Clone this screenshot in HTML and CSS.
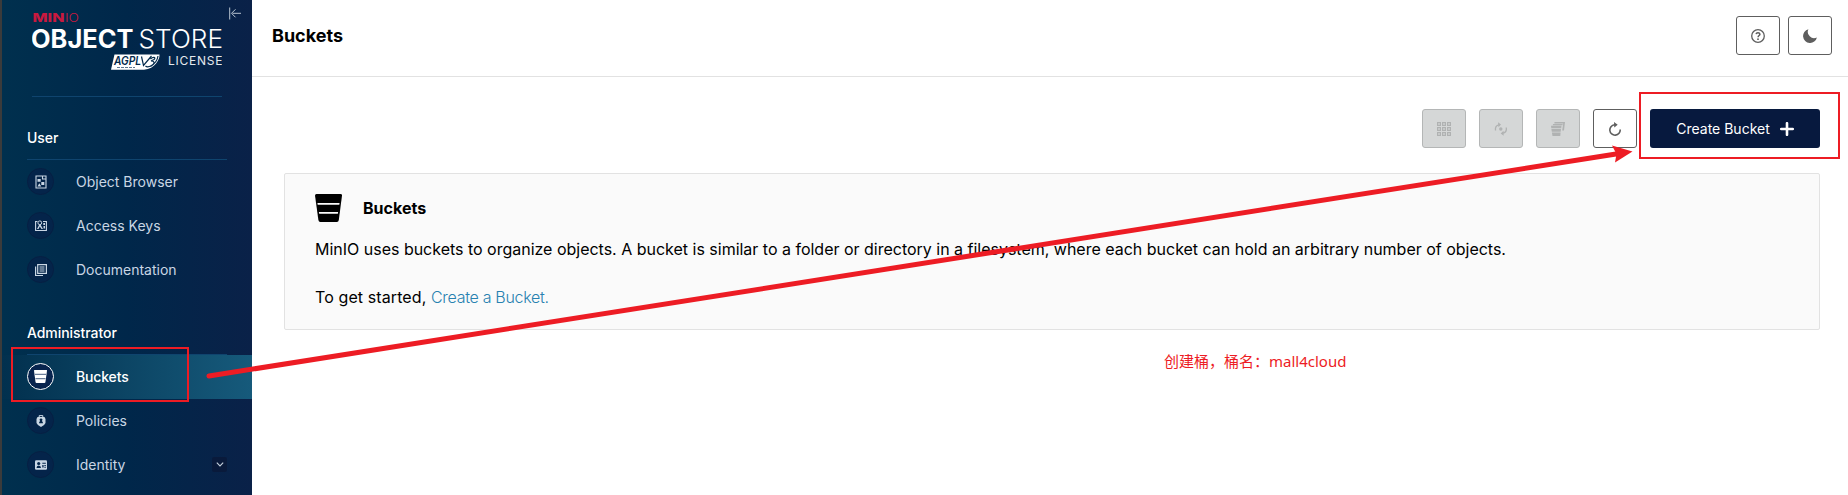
FILE: index.html
```html
<!DOCTYPE html>
<html lang="en">
<head>
<meta charset="utf-8">
<title>Buckets</title>
<link rel="stylesheet" href="styles.css">
</head>
<body>
<div class="app">
  <nav class="sidebar">
    <div class="brand">
      <svg class="logo" width="190" height="62" viewBox="32 10 190 62">
        <text class="logo-minio" x="32.5" y="22" textLength="32" lengthAdjust="spacingAndGlyphs">MIN</text>
        <text class="logo-io" x="65" y="22" textLength="14" lengthAdjust="spacingAndGlyphs">IO</text>
        <text class="logo-object" x="31" y="47.500" textLength="102.500" lengthAdjust="spacingAndGlyphs">OBJECT</text>
        <text class="logo-store" x="138.500" y="47.500" textLength="84.500" lengthAdjust="spacingAndGlyphs">STORE</text>
        <path fill="#fff" d="M114.500 54.500H159.500C160 59 155 69 144 69.800H111Z"/>
        <text class="logo-agpl" x="114" y="64.800" textLength="27" lengthAdjust="spacingAndGlyphs">AGPL</text>
        <path d="M117 67.500H135" stroke="#5c7690" stroke-dasharray="3 1"/>
        <path d="M141.500 56.500l2 9 8-9.500M150.500 59c2.500-2.500 6-2 3.500.5l-3 1.500c4 0 4 2.500.5 4.500-2.500 1.500-5 1.500-6 .5M158 56c-.5 4-3.500 8-7.500 10.500" fill="none" stroke="#02294b" stroke-width="1.200"/>
        <text class="logo-license" x="168" y="65.300" textLength="54.500">LICENSE</text>
      </svg>
      <svg class="collapse" width="13" height="13" viewBox="0 0 13 13" fill="none" stroke="#b8c4d0"><path d="M.7.500v12M12 6.300H3.500M6.500 2.300l-4 4 4 4"/></svg>
    </div>
    <div class="group">User</div>
    <a class="item"><span class="badge"><svg width="12" height="14" viewBox="0 0 12 14"><path d="M1 1h10v12H1zM7.500 1v3H11" fill="none" stroke="#c9d6e4" stroke-width="1.100"/><path d="M2.500 4h3.200v2.800H2.500zM6.300 7h3v3h-3zM2.500 11.500 4.300 8.200l2 3.300z" fill="#c9d6e4"/></svg></span><span class="label">Object Browser</span></a>
    <a class="item"><span class="badge"><svg width="12" height="11" viewBox="0 0 12 11"><path d="M2.500 1.500H.600v9h10.800v-9H8" fill="none" stroke="#c9d6e4" stroke-width="1.100"/><circle cx="4.800" cy="2.800" r="1.900" fill="none" stroke="#c9d6e4"/><path d="M4.300 4.500 2 9h1.500L4.800 6.500 6.500 9H8L5.400 4.500zM8.300 3h1.700v2H8.300zM8.500 6H10v2.500H8.500z" fill="#c9d6e4"/></svg></span><span class="label">Access Keys</span></a>
    <a class="item"><span class="badge"><svg width="12" height="12" viewBox="0 0 12 12" fill="none" stroke="#c9d6e4"><path d="M.6 2.500v9H8M2.700.600h8.700v8.800H2.700z" stroke-width="1.200"/><path d="M4.500 3h5M4.500 5h5M4.500 7h5"/></svg></span><span class="label">Documentation</span></a>
    <div class="group">Administrator</div>
    <a class="item active"><span class="badge"><svg width="13" height="13" viewBox="0 0 28 28"><path fill="#fff" d="M1 0h26q1.200 0 1 1.500L24.700 26q-.3 2-2 2H5.300q-1.700 0-2-2L0 1.500Q0 0 1 0z"/><path fill="#6d7f9b" d="M1.500 8h25l-.4 3H1.900zM3 17h22l-.4 3H3.400z"/></svg></span><span class="label">Buckets</span></a>
    <a class="item"><span class="badge"><svg width="10" height="12" viewBox="0 0 10 12"><path d="M3.200 2V.600h3.600V2" fill="none" stroke="#c9d6e4"/><path fill="#c9d6e4" fill-rule="evenodd" d="M1.500 2h7L9.500 4v4Q8.500 10.500 5 12 1.500 10.500.5 8V4zM5 3.400a1.400 1.400 0 0 0-.9 2.500Q3 6.500 3 8.300h4Q7 6.500 5.900 5.900A1.400 1.400 0 0 0 5 3.400z"/></svg></span><span class="label">Policies</span></a>
    <a class="item"><span class="badge"><svg width="12" height="10" viewBox="0 0 12 10"><rect width="12" height="9.500" y=".2" rx="1.200" fill="#c9d6e4"/><path fill="#04244a" d="M7.300 2.700h3.500v1H7.300zM7.300 5h1.300v2.500H7.300zM9.400 5h1.400v1H9.400zM9.400 6.700h1.400v1H9.400zM1.500 8q0-2.200 2.200-2.500Q6 5.800 6 8z"/><circle cx="3.700" cy="3.500" r="1.600" fill="#04244a"/></svg></span><span class="label">Identity</span><span class="expand"><svg width="8" height="5" viewBox="0 0 8 5"><path d="M.8.600 4 3.900 7.200.600" fill="none" stroke="#c4cfdb" stroke-width="1.100"/></svg></span></a>
  </nav>
  <main class="main">
    <header class="topbar">
      <h1 class="title">Buckets</h1>
      <div class="actions">
        <button class="btn"><svg width="14" height="14" viewBox="0 0 14 14"><circle cx="7" cy="7" r="6.300" fill="none" stroke="#5e5e5e" stroke-width="1.300"/><path d="M5.100 5.100Q5.300 3.700 7 3.700T8.900 5.200C8.900 6.500 7.100 6.500 7.100 8.200" fill="none" stroke="#5e5e5e" stroke-width="1.500"/><circle cx="7" cy="10.200" r=".9" fill="#5e5e5e"/></svg></button>
        <button class="btn"><svg width="14" height="14" viewBox="0 0 14 14"><path fill="#5e5e5e" d="M5.400.200A7 7 0 1 0 13.900 8.500 6.300 6.300 0 0 1 5.400.200z"/></svg></button>
      </div>
    </header>
    <div class="toolbar">
      <button class="btn disabled"><svg width="14" height="14" viewBox="0 0 14 14" fill="none" stroke="#b0b2b2" stroke-width="1.200"><path d="M.6.600h2.800v2.800H.6zM5.600.600h2.800v2.800H5.600zM10.600.600h2.800v2.800h-2.800zM.6 5.600h2.800v2.800H.6zM5.600 5.600h2.800v2.800H5.600zM10.600 5.600h2.800v2.800h-2.800zM.6 10.600h2.800v2.800H.6zM5.600 10.600h2.800v2.800H5.600zM10.600 10.600h2.800v2.800h-2.800z"/></svg></button>
      <button class="btn disabled"><svg width="14" height="14" viewBox="0 0 14 14" fill="none" stroke="#b0b2b2" stroke-width="1.300"><path d="M1.500 8.500Q.8 3.500 5 2.800M12.300 5.500Q13 10.500 8.700 11.200"/><path d="M4 .3 7 2.600 4.500 5.300zM9.500 8.700 6.700 11.500 9.700 13.800z" fill="#b0b2b2" stroke="none"/><circle cx="6.800" cy="7" r="1.700" fill="#b0b2b2" stroke="none"/></svg></button>
      <button class="btn disabled"><svg width="14" height="14" viewBox="0 0 14 14" fill="#b0b2b2"><path d="M3.500 0H14l-1 8.500h-1.800L12.200 1.400H3.400zM2 2h9.700l-.2 1.200H1.800zM0 3.800h10.500L10.200 6.200H.3zM.4 6.900H10l-.3 2.800H.8zM.9 10.400h8.700L9.300 14H1.500z"/></svg></button>
      <button class="btn"><svg width="14" height="14" viewBox="0 0 14 14"><path d="M8 2.800H6.500A5.200 5.200 0 1 0 12.200 7.500" fill="none" stroke="#5e5e5e" stroke-width="1.600"/><path d="M6 0 9.700 2.700 6.300 5.500z" fill="#5e5e5e"/></svg></button>
      <button class="create">Create Bucket<svg width="14" height="14" viewBox="0 0 14 14"><path d="M7 1.200v11.600M1.200 7h11.600" stroke="#fff" stroke-width="2.600" stroke-linecap="round"/></svg></button>
    </div>
    <section class="help">
      <div class="help-head">
        <svg width="27" height="28" viewBox="0 0 28 28" preserveAspectRatio="none"><path d="M1.500 0h25Q28.200 0 28 1.500L24.700 26q-.3 2-2 2H5.500q-1.700 0-2-2L0 1.500Q0 0 1.500 0z"/><path fill="#fafafa" d="M2.500 8.900h23l-.3 1.800H2.800zM4 17.900h20l-.3 1.800H4.300z"/></svg>
        <h2 class="help-title">Buckets</h2>
      </div>
      <p class="help-text intro">MinIO uses buckets to organize objects. A bucket is similar to a folder or directory in a filesystem, where each bucket can hold an arbitrary number of objects.</p>
      <p class="help-text"><span class="lead">To get started, </span><a class="link">Create a Bucket.</a></p>
    </section>
    <p class="note">创建桶，桶名：mall4cloud</p>
  </main>
</div>
<svg class="annotations" width="1848" height="495" viewBox="0 0 1848 495" fill="none" stroke="#ed1c24">
  <rect x="12" y="348" width="176" height="53" stroke-width="2"/>
  <rect x="1640" y="93" width="199" height="65" stroke-width="2"/>
  <path d="M209 376 1616 154" stroke-width="5" stroke-linecap="round"/>
  <path d="M1632.500 151.500 1612 145.500 1616.500 154 1615 162.500z" fill="#ed1c24" stroke="none"/>
</svg>
</body>
</html>
```
FILE: styles.css
```css
* { box-sizing: border-box; }
body { margin: 0; background: #fff; color: #000; font-family: Inter, sans-serif; overflow: hidden; }
h1, h2, p { margin: 0; }
.app { display: flex; height: 495px; }
.sidebar {
  width: 252px; flex: none; border-left: 2px solid #3b3b3b;
  background: linear-gradient(90deg, #00304e 0%, #00274a 50%, #0a2148 100%);
}
.brand { position: relative; height: 97px; margin: 0 30px; padding-top: 10px; border-bottom: 1px solid #0f446e; }
.logo { display: block; }
.collapse { position: absolute; left: 197px; top: 7px; }
.logo-minio { font-size: 11.5px; font-weight: 800; fill: #c8193f; }
.logo-io { font-size: 11.5px; font-weight: 300; fill: #c8193f; }
.logo-object { font-size: 25px; font-weight: 700; fill: #fff; }
.logo-store { font-size: 25px; font-weight: 300; fill: #fff; }
.logo-agpl { font-size: 11.5px; font-weight: 600; font-style: italic; fill: #02294b; }
.logo-license { font-size: 12px; font-weight: 400; fill: #e4e9ee; }
.group {
  display: flex; align-items: center; height: 44px; margin: 19px 25px 0; border-bottom: 1px solid #0f446e;
  color: #fff; font-size: 14px; font-weight: 500; line-height: 20px; letter-spacing: -.05px;
}
.item { display: flex; align-items: center; height: 44px; padding: 0 25px 1px; color: #c9d6e4; font-size: 14px; }
.label { line-height: 19px; }
.badge {
  display: flex; align-items: center; justify-content: center; width: 27px; height: 27px; flex: none;
  margin-right: 22px; border: 1px solid #061f43; border-radius: 50%; background: #04244a;
}
.item.active { color: #fff; font-weight: 500; background: linear-gradient(90deg, #02304e, #165a7b); }
.active .badge { border-color: #fff; background: #08244e; }
.active .label { letter-spacing: -.15px; }
.expand { display: flex; align-items: center; justify-content: center; width: 15px; height: 15px; margin-left: auto; border-radius: 2px; background: #091a3b; }
.main { flex: 1; min-width: 0; }
.topbar { display: flex; justify-content: space-between; height: 77px; padding: 16px 16px 0 20px; border-bottom: 1px solid #e2e2e2; }
.title { font-size: 18px; font-weight: 700; line-height: 39px; }
.actions { display: flex; gap: 8px; }
.btn {
  display: flex; align-items: center; justify-content: center; width: 44px; height: 39px; padding: 0;
  border: 1px solid #5e5e5e; border-radius: 3px; background: #fff;
}
.btn.disabled { border-color: #b4b6b6; background: #d5d7d7; }
.toolbar { display: flex; justify-content: flex-end; gap: 13px; padding: 32px 28px 0 0; }
.create {
  display: flex; align-items: center; justify-content: center; gap: 10px; width: 170px; height: 39px; padding: 0;
  border: 0; border-radius: 3px; background: #07193e; color: #fff; font: 400 14px Inter, sans-serif;
}
.help { height: 157px; margin: 25px 28px 0 32px; padding: 20px 30px; border: 1px solid #e2e2e2; border-radius: 2px; background: #fafafa; }
.help-head { display: flex; align-items: center; gap: 21px; height: 28px; }
.help-title { font-size: 16px; font-weight: 700; line-height: 20px; }
.help-text { margin-top: 24px; font-size: 16px; line-height: 24px; white-space: nowrap; }
.help-text.intro { margin-top: 15px; letter-spacing: -.01px; }
.lead { letter-spacing: .1px; }
.link { color: #2781b0; font-weight: 350; letter-spacing: -.3px; }
.note { margin: 19px 0 0 912px; color: #ed1c24; font: 15px/24px "Noto Sans", "Noto Sans CJK SC", sans-serif; }
.annotations { position: absolute; left: 0; top: 0; pointer-events: none; }
```
